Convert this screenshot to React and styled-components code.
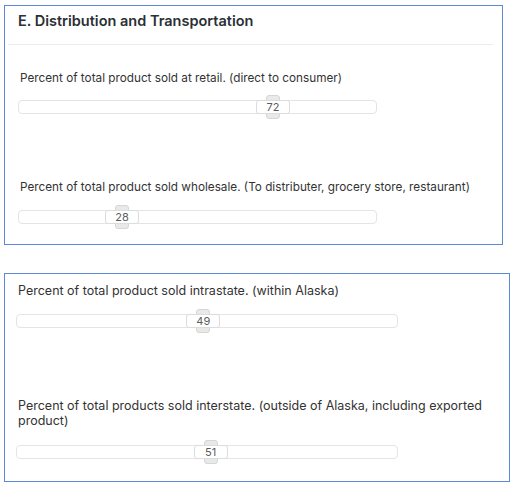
import styled, { createGlobalStyle } from 'styled-components';

const GlobalStyle = createGlobalStyle`
  body {
    margin: 0;
    background: #fff;
    font-family: Inter, "Noto Sans", sans-serif;
    color: #333;
  }
`;

const THUMB = 14;

const Page = styled.div`
  display: flex;
  flex-direction: column;
  padding: 5px 0 0 4px;
`;

const Card = styled.section`
  box-sizing: border-box;
  width: ${p => p.$width}px;
  height: ${p => p.$height}px;
  margin-bottom: ${p => p.$gap || 0}px;
  border: 1px solid #5b88d8;
  background: #fff;
  display: flex;
  flex-direction: column;
`;

const Header = styled.header`
  box-sizing: border-box;
  height: 38px;
  padding: 6px 13px 0;
`;

const Title = styled.h2`
  margin: 0;
  font-size: 14.5px;
  line-height: 18px;
  font-weight: 600;
  color: #2b2f36;
`;

const Divider = styled.hr`
  margin: 0 9px 0 3px;
  border: none;
  border-top: 1px solid #ececec;
`;

const Body = styled.div`
  display: flex;
  flex-direction: column;
  padding: ${p => p.$pad};
  font-size: ${p => p.$fontSize}px;
`;

const Field = styled.div`
  display: flex;
  flex-direction: column;
  margin-top: ${p => p.$top}px;
`;

const Label = styled.label`
  font-size: inherit;
  line-height: 15px;
  color: #333;
  padding-left: ${p => p.$indent}px;
  margin-bottom: ${p => p.$space}px;
`;

const Track = styled.div`
  position: relative;
  box-sizing: border-box;
  width: ${p => p.$width}px;
  height: 14px;
  border: 1px solid #e4e4e4;
  border-radius: 4px;
  background: #fff;
`;

const Thumb = styled.div`
  position: absolute;
  top: 50%;
  width: ${THUMB}px;
  height: 24px;
  transform: translate(-50%, -50%);
  box-sizing: border-box;
  border: 1px solid #d6d6d6;
  border-radius: 3px;
  background: #e9e9e9;
`;

const Value = styled.span`
  position: absolute;
  top: 50%;
  transform: translate(-50%, -50%);
  box-sizing: border-box;
  width: 34px;
  height: 14px;
  border: 1px solid #dcdcdc;
  border-radius: 3px;
  background: #fff;
  font-size: 11px;
  line-height: 12px;
  text-align: center;
  color: #5c5c5c;
`;

const Slider = ({ value, width }) => {
  const left = THUMB / 2 + (value / 100) * (width - 2 - THUMB);
  return (
    <Track $width={width}>
      <Thumb style={{ left }} />
      <Value style={{ left }}>{value}</Value>
    </Track>
  );
};

export default function App() {
  return (
    <Page>
      <GlobalStyle />
      <Card $width={499} $height={240} $gap={28}>
        <Header>
          <Title>E. Distribution and Transportation</Title>
        </Header>
        <Divider />
        <Body $pad="0 13px" $fontSize={11.75}>
          <Field $top={26}>
            <Label $indent={2} $space={14}>
              Percent of total product sold at retail. (direct to consumer)
            </Label>
            <Slider value={72} width={359} />
          </Field>
          <Field $top={66}>
            <Label $indent={2} $space={15}>
              Percent of total product sold wholesale. (To distributer, grocery
              store, restaurant)
            </Label>
            <Slider value={28} width={359} />
          </Field>
        </Body>
      </Card>
      <Card $width={506} $height={209}>
        <Body $pad="0 8px 0 11px" $fontSize={12.5}>
          <Field $top={9}>
            <Label $indent={2} $space={16}>
              Percent of total product sold intrastate. (within Alaska)
            </Label>
            <Slider value={49} width={382} />
          </Field>
          <Field $top={70}>
            <Label $indent={2} $space={17}>
              Percent of total products sold interstate. (outside of Alaska,
              including exported product)
            </Label>
            <Slider value={51} width={382} />
          </Field>
        </Body>
      </Card>
    </Page>
  );
}
